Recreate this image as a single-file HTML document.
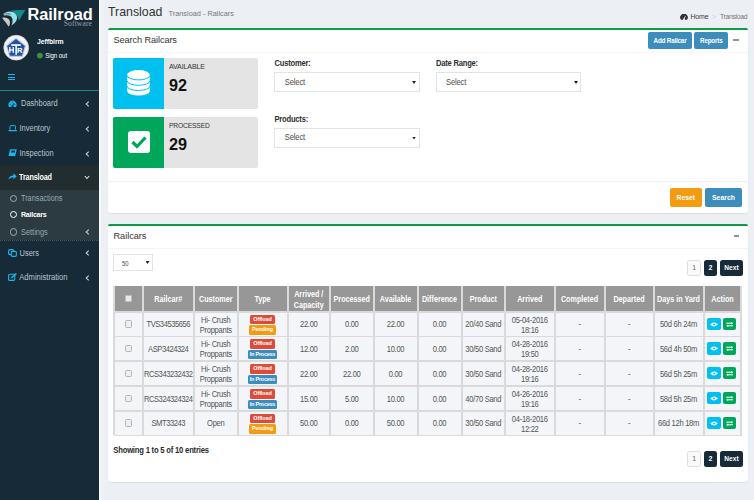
<!DOCTYPE html><html><head><meta charset="utf-8"><style>
*{margin:0;padding:0;box-sizing:border-box}
html,body{width:754px;height:500px;overflow:hidden;background:#ecf0f5;font-family:"Liberation Sans",sans-serif}
body{position:relative}
.a{position:absolute;white-space:nowrap}
.mi{position:absolute;left:20px;font-size:7.5px;color:#b8c7ce;line-height:10px;white-space:nowrap;transform:scaleY(1.13);transform-origin:0 62%;margin-top:0.6px}
.chev{position:absolute;left:85px;width:4px;height:6px}
.box{position:absolute;background:#fff;border-top:2px solid #0e9b45;border-radius:2px;box-shadow:0 1px 1px rgba(0,0,0,0.08)}
.dot{position:absolute;height:0;border-top:1px dotted #ececec}
.btn{position:absolute;color:#fff;font-weight:bold;text-align:center;border-radius:2px;white-space:nowrap}
.btn span{display:inline-block;transform:scaleY(1.12)}
.sel{position:absolute;border:1px solid #e0e3e8;background:#fff;height:20px}
.sel .s{position:absolute;left:9px;top:4.3px;font-size:7.6px;letter-spacing:-0.15px;color:#4a4a4a;line-height:10px;transform:scaleY(1.12);transform-origin:0 60%;margin-top:0.5px}
.sel .ar{position:absolute;width:4px;height:3px;background:#222;clip-path:polygon(0 0,100% 0,50% 100%)}
.lbl{position:absolute;font-weight:bold;font-size:7.6px;letter-spacing:-0.22px;color:#2e2e2e;line-height:8px;white-space:nowrap;transform:scaleY(1.08);transform-origin:0 70%;margin-top:0.4px}
.th{position:absolute;color:#fff;font-weight:bold;font-size:7.2px;line-height:9.5px;text-align:center;display:flex;align-items:center;justify-content:center;padding-top:1.9px}
.td{position:absolute;color:#555;font-size:7.6px;letter-spacing:-0.3px;line-height:10px;text-align:center;display:flex;flex-direction:column;align-items:center;justify-content:center;padding-top:2.4px}
.vl{position:absolute;width:2px;background:#dadada}
.hl{position:absolute;height:1.5px;background:#dadada}
.bdg{display:block;color:#fff;font-weight:bold;font-size:5.5px;letter-spacing:-0.1px;line-height:9.5px;height:9.5px;border-radius:1.5px;padding:0 2.6px;margin:0.5px 0}
.syh{display:inline-block;transform:scaleY(1.13);line-height:9.6px}
.sy{display:inline-block;transform:scaleY(1.16);line-height:9.1px}
.pg{position:absolute;height:16.8px;border-radius:2.5px;font-size:7px;text-align:center;line-height:16.8px;font-weight:bold}
</style></head><body>
<div class="a" style="left:0;top:0;width:99px;height:500px;background:#172a38"></div>
<div class="a" style="left:99px;top:0;width:1.5px;height:500px;background:#f6f8fa"></div>
<svg class="a" style="left:1px;top:8px" width="26" height="20" viewBox="0 0 26 20">
<path d="M10 2.5 L24.5 1.8 L18 12.5 Q16.5 6 10 2.5 Z" fill="#138a86"/>
<path d="M2.5 5.5 Q8 2 13 4.5 Q17.5 7.5 15.5 12.5 Q14 15.5 10.5 17.5 Q13 11.5 10 8.5 Q7 6.5 3 7.5 Z" fill="#9adfe6"/>
<path d="M2.5 5.8 Q7 4 10 6 L9.3 7 Q6 5.5 2.8 6.8 Z" fill="#6f8794"/>
<path d="M1.5 9.5 Q6 9 8.2 11.5 Q9.8 14 8.5 17.5 L7.5 18.5 Q5 14.5 1.5 10.5 Z" fill="#cfc9c3"/>
</svg>
<div class="a" style="left:27.4px;top:5.4px;font-size:16.35px;font-weight:bold;color:#fff;line-height:19px">Railroad</div>
<div class="a" style="left:63.8px;top:20.4px;font-family:'Liberation Serif',serif;font-size:7.6px;color:#9aa0a6;line-height:8px;letter-spacing:0.1px">Software</div>
<svg class="a" style="left:0;top:32px" width="32" height="32" viewBox="0 0 32 32">
<circle cx="16.2" cy="15.7" r="12.4" fill="#f3f3f3" stroke="#d0d0d0" stroke-width="0.8"/>
<path d="M16 6.3 L25.4 13.8 L22.4 24.2 L9.6 24.2 L6.6 13.8 Z" fill="#2352a3" stroke="#b9c9e2" stroke-width="1.1"/>
<rect x="11.2" y="12.2" width="9.6" height="1.7" fill="#fff"/>
<rect x="15.3" y="12.2" width="1.7" height="10.6" fill="#eef"/>
<rect x="9.2" y="15" width="1.3" height="5.8" fill="#fff"/>
<rect x="12.6" y="15" width="1.3" height="5.8" fill="#fff"/>
<rect x="9.2" y="17.3" width="4.7" height="1.2" fill="#fff"/>
<text x="16.9" y="20.8" font-family="Liberation Sans" font-weight="bold" font-size="7.6" fill="#fff">R</text>
</svg>
<div class="a" style="left:37px;top:37.2px;font-size:6.85px;letter-spacing:-0.05px;font-weight:bold;color:#fff;line-height:9px;transform:scaleY(1.08);transform-origin:0 70%">Jeffbirm</div>
<svg class="a" style="left:36px;top:52px" width="8" height="8" viewBox="0 0 8 8"><circle cx="3.9" cy="3.6" r="2.9" fill="#3f9139"/></svg>
<div class="a" style="left:45.3px;top:52.1px;font-size:6.1px;letter-spacing:-0.08px;color:#fff;line-height:8px;transform:scaleY(1.15);transform-origin:0 70%">Sign out</div>
<div class="a" style="left:8px;top:74.1px;width:7.2px;height:1.4px;background:#1ab7ea"></div>
<div class="a" style="left:8px;top:76.6px;width:7.2px;height:1.4px;background:#1ab7ea"></div>
<div class="a" style="left:8px;top:79.1px;width:7.2px;height:1.4px;background:#1ab7ea"></div>
<div class="a" style="left:0;top:90px;width:99px;height:1.3px;background:#17898c"></div>
<svg class="a" style="left:7.5px;top:99.5px" width="9" height="8" viewBox="0 0 9 8"><path d="M1 7 A4.1 4.1 0 1 1 8 7 Z" fill="#1ab7ea"/><path d="M4.5 6.3 L5.8 3.2" stroke="#172a38" stroke-width="1"/><circle cx="4.5" cy="6.2" r="1.1" fill="#172a38"/><circle cx="2.2" cy="4.2" r="0.5" fill="#172a38"/><circle cx="4.5" cy="2.1" r="0.5" fill="#172a38"/><circle cx="6.8" cy="4.2" r="0.5" fill="#172a38"/></svg>
<div class="mi" style="top:98.7px;left:21px">Dashboard</div>
<svg class="a" style="left:85px;top:101.0px" width="5" height="6" viewBox="0 0 5 6"><path d="M3.7 0.7 L1.2 3 L3.7 5.3" fill="none" stroke="#c3d0d6" stroke-width="1.1"/></svg>
<svg class="a" style="left:7.5px;top:124.5px" width="9.5" height="7" viewBox="0 0 9.5 7"><path d="M2 4.6 V1.4 Q2 0.6 2.8 0.6 H6.7 Q7.5 0.6 7.5 1.4 V4.6" fill="none" stroke="#1ab7ea" stroke-width="1"/><path d="M0.3 5 H9.2 L8.6 6.3 H0.9 Z" fill="#1ab7ea"/></svg>
<div class="mi" style="top:123.6px;left:19.5px">Inventory</div>
<svg class="a" style="left:85px;top:126.0px" width="5" height="6" viewBox="0 0 5 6"><path d="M3.7 0.7 L1.2 3 L3.7 5.3" fill="none" stroke="#c3d0d6" stroke-width="1.1"/></svg>
<svg class="a" style="left:7.5px;top:148.8px" width="9" height="7.5" viewBox="0 0 9 7.5"><path d="M3 0.3 H8.5 Q8.8 0.3 8.7 0.8 L7.3 6.6 Q7.2 7.1 6.7 7.1 H0.5 L1.9 1 Q2.1 0.3 3 0.3 Z" fill="#1ab7ea"/><path d="M3.4 1.6 H7.2 L6.8 3.4 H3 Z" fill="#172a38"/></svg>
<div class="mi" style="top:148px;left:19.5px">Inspection</div>
<svg class="a" style="left:85px;top:150.5px" width="5" height="6" viewBox="0 0 5 6"><path d="M3.7 0.7 L1.2 3 L3.7 5.3" fill="none" stroke="#c3d0d6" stroke-width="1.1"/></svg>
<div class="a" style="left:0;top:165.3px;width:99px;height:24.5px;background:#222d30"></div>
<div class="a" style="left:0;top:190px;width:99px;height:50px;background:#2c3b41"></div>
<div class="a" style="left:0;top:239.5px;width:99px;height:0;border-top:1px dotted #46565c"></div>
<svg class="a" style="left:8px;top:173px" width="9" height="7" viewBox="0 0 9 7"><path d="M0.5 6.8 Q1 2.5 5.5 2.5 V0.3 L8.7 3.3 L5.5 6.2 V4.2 Q2.5 4 0.5 6.8 Z" fill="#1ab7ea"/></svg>
<div class="mi" style="top:172.3px;left:19px;color:#fff;font-weight:bold;font-size:7.25px;letter-spacing:-0.15px">Transload</div>
<svg class="a" style="left:84px;top:174.5px" width="6" height="5" viewBox="0 0 6 5"><path d="M0.8 1 L3 3.5 L5.2 1" fill="none" stroke="#dfe7ea" stroke-width="1.1"/></svg>
<div class="a" style="left:9.6px;top:194.6px;width:7.5px;height:7.5px;border-radius:50%;border:1.7px solid #9cb0b9"></div>
<div class="mi" style="top:193.5px;left:21px;color:#93a9b3;font-size:7.3px">Transactions</div>
<div class="a" style="left:9.6px;top:210.6px;width:7.5px;height:7.5px;border-radius:50%;border:1.7px solid #fff"></div>
<div class="mi" style="top:209.6px;left:21px;color:#fff;font-weight:bold;font-size:7.1px;letter-spacing:-0.27px">Railcars</div>
<div class="a" style="left:9.6px;top:228.4px;width:7.5px;height:7.5px;border-radius:50%;border:1.7px solid #9cb0b9"></div>
<div class="mi" style="top:227.2px;left:21px;color:#93a9b3;font-size:7.4px">Settings</div>
<svg class="a" style="left:85px;top:229.0px" width="5" height="6" viewBox="0 0 5 6"><path d="M3.7 0.7 L1.2 3 L3.7 5.3" fill="none" stroke="#c3d0d6" stroke-width="1.1"/></svg>
<svg class="a" style="left:7.5px;top:249px" width="9" height="8" viewBox="0 0 9 8"><rect x="0.6" y="0.6" width="5" height="5" rx="1.3" fill="none" stroke="#1ab7ea" stroke-width="1.1"/><rect x="3.2" y="2.4" width="5.2" height="5" rx="1.3" fill="#172a38" stroke="#1ab7ea" stroke-width="1.1"/></svg>
<div class="mi" style="top:248px;left:19.5px">Users</div>
<svg class="a" style="left:85px;top:250.0px" width="5" height="6" viewBox="0 0 5 6"><path d="M3.7 0.7 L1.2 3 L3.7 5.3" fill="none" stroke="#c3d0d6" stroke-width="1.1"/></svg>
<svg class="a" style="left:7.5px;top:272.8px" width="9" height="8" viewBox="0 0 9 8"><rect x="0.6" y="1.3" width="6.2" height="6.1" rx="1.2" fill="none" stroke="#1ab7ea" stroke-width="1.1"/><path d="M3.3 5 L8.3 0.4" stroke="#1ab7ea" stroke-width="1.5"/></svg>
<div class="mi" style="top:272.8px;left:19.3px;font-size:7.6px">Administration</div>
<svg class="a" style="left:85px;top:275.0px" width="5" height="6" viewBox="0 0 5 6"><path d="M3.7 0.7 L1.2 3 L3.7 5.3" fill="none" stroke="#c3d0d6" stroke-width="1.1"/></svg>
<div class="a" style="left:108px;top:4.1px;font-size:12.35px;color:#333;line-height:16px">Transload</div>
<div class="a" style="left:168.5px;top:8.8px;font-size:7.35px;color:#777;line-height:9px">Transload - Railcars</div>
<svg class="a" style="left:679.5px;top:13.5px" width="8" height="6" viewBox="0 0 8 6"><path d="M1 5.8 A3.8 3.8 0 1 1 7 5.8 Z" fill="#333"/><path d="M4 5.3 L5.3 2.3" stroke="#ecf0f5" stroke-width="0.9"/><circle cx="4" cy="5.2" r="0.9" fill="#ecf0f5"/></svg>
<div class="a" style="left:690.5px;top:13.3px;font-size:7px;letter-spacing:-0.2px;color:#3a3a3a;line-height:8px">Home</div>
<div class="a" style="left:712px;top:13.3px;font-size:6.6px;color:#ccc;line-height:8px">&gt;</div>
<div class="a" style="left:720px;top:13.3px;font-size:6.9px;letter-spacing:-0.36px;color:#777;line-height:8px">Transload</div>
<div class="box" style="left:107.5px;top:27.5px;width:640px;height:185.3px"></div>
<div class="a" style="left:113.5px;top:34.5px;font-size:9.2px;letter-spacing:-0.1px;color:#333;line-height:11px">Search Railcars</div>
<div class="btn" style="left:648px;top:32px;width:44px;height:17px;background:#3c8dbc;font-size:6.3px;letter-spacing:-0.2px;line-height:17.5px"><span>Add Railcar</span></div>
<div class="btn" style="left:694.4px;top:32px;width:33.8px;height:17px;background:#3c8dbc;font-size:6.3px;letter-spacing:-0.2px;line-height:17.5px"><span>Reports</span></div>
<div class="a" style="left:733px;top:39.4px;width:5.5px;height:1.5px;background:#8e97a8"></div>
<div class="dot" style="left:108px;top:52px;width:639px"></div>
<div class="a" style="left:113px;top:58px;width:144.5px;height:50.5px;background:#e4e4e4;border-radius:2px"></div>
<div class="a" style="left:113px;top:58px;width:51px;height:50.5px;background:#00c0ef;border-radius:2px 0 0 2px"></div>
<div class="a" style="left:169px;top:62.6px;font-size:7.1px;letter-spacing:-0.15px;color:#333;line-height:9px;transform:scaleY(1.1);transform-origin:0 70%">AVAILABLE</div>
<div class="a" style="left:169px;top:76px;font-size:16.2px;font-weight:bold;color:#111;line-height:18px">92</div>
<div class="a" style="left:113px;top:117px;width:144.5px;height:50.5px;background:#e4e4e4;border-radius:2px"></div>
<div class="a" style="left:113px;top:117px;width:51px;height:50.5px;background:#00a65a;border-radius:2px 0 0 2px"></div>
<div class="a" style="left:169px;top:121.1px;font-size:6.7px;letter-spacing:-0.15px;color:#333;line-height:9px;transform:scaleY(1.1);transform-origin:0 70%">PROCESSED</div>
<div class="a" style="left:169px;top:135px;font-size:16.2px;font-weight:bold;color:#111;line-height:18px">29</div>
<svg class="a" style="left:127.3px;top:70.3px" width="23" height="26" viewBox="0 0 23 26">
<path d="M0.2 4.5 A11.3 4.4 0 0 1 22.8 4.5 V21.2 A11.3 4.4 0 0 1 0.2 21.2 Z" fill="#fff"/>
<path d="M0.2 5.6 A11.3 4.3 0 0 0 22.8 5.6" fill="none" stroke="#00c0ef" stroke-width="1"/>
<path d="M0.2 11 A11.3 4.3 0 0 0 22.8 11" fill="none" stroke="#00c0ef" stroke-width="1"/>
<path d="M0.2 16.2 A11.3 4.3 0 0 0 22.8 16.2" fill="none" stroke="#00c0ef" stroke-width="1"/>
</svg>
<svg class="a" style="left:127.5px;top:131px" width="22" height="22" viewBox="0 0 22 22">
<rect x="0" y="0" width="22" height="22" rx="3" fill="#fff"/>
<path d="M4.5 11 L9 15.5 L17.5 6.5" fill="none" stroke="#00a65a" stroke-width="3.2"/>
</svg>
<div class="lbl" style="left:274.5px;top:60px">Customer:</div>
<div class="sel" style="left:274px;top:72px;width:146px"><div class="s" style="left:9.8px">Select</div><div class="ar" style="left:137px;top:8px"></div></div>
<div class="lbl" style="left:436px;top:60px">Date Range:</div>
<div class="sel" style="left:436px;top:72px;width:145px"><div class="s">Select</div><div class="ar" style="left:137px;top:8px"></div></div>
<div class="lbl" style="left:274.5px;top:115.5px">Products:</div>
<div class="sel" style="left:274px;top:127.5px;width:146px"><div class="s" style="left:9.8px">Select</div><div class="ar" style="left:137px;top:8px"></div></div>
<div class="a" style="left:108px;top:181px;width:639px;height:1px;background:#f1f1f1"></div>
<div class="btn" style="left:669.5px;top:188px;width:32.5px;height:19px;background:#f39c12;font-size:6.8px;line-height:19px"><span>Reset</span></div>
<div class="btn" style="left:705px;top:188px;width:37px;height:19px;background:#3c8dbc;font-size:6.9px;line-height:19px"><span>Search</span></div>
<div class="box" style="left:107.5px;top:223.7px;width:640px;height:258.3px"></div>
<div class="a" style="left:113.5px;top:231px;font-size:9.2px;letter-spacing:-0.05px;color:#333;line-height:11px">Railcars</div>
<div class="a" style="left:733.5px;top:235.4px;width:5.5px;height:1.5px;background:#8e97a8"></div>
<div class="dot" style="left:108px;top:247.5px;width:639px"></div>
<div class="sel" style="left:113px;top:254px;width:39.5px;height:16.5px"><div class="s" style="left:8px;top:3.5px;font-size:5.9px">50</div><div class="ar" style="left:31.5px;top:6px"></div></div>
<div class="pg" style="left:687.3px;top:259.5px;width:14px;background:#fafafa;border:1px solid #ddd;color:#666;font-weight:normal;line-height:14.8px">1</div>
<div class="pg" style="left:704px;top:259.5px;width:13px;background:#172a38;color:#fff">2</div>
<div class="pg" style="left:720px;top:259.5px;width:23px;background:#172a38;color:#fff;font-size:6.6px">Next</div>
<div class="a" style="left:113.5px;top:286px;width:628.0px;height:25.5px;background:#979797"></div>
<div class="a" style="left:113.5px;top:311.5px;width:628.0px;height:123.5px;background:#f3f5f8"></div>
<div class="vl" style="left:112.5px;top:286px;height:149px"></div>
<div class="vl" style="left:141.5px;top:286px;height:149px"></div>
<div class="vl" style="left:193px;top:286px;height:149px"></div>
<div class="vl" style="left:236.5px;top:286px;height:149px"></div>
<div class="vl" style="left:286.5px;top:286px;height:149px"></div>
<div class="vl" style="left:329px;top:286px;height:149px"></div>
<div class="vl" style="left:372.5px;top:286px;height:149px"></div>
<div class="vl" style="left:416.5px;top:286px;height:149px"></div>
<div class="vl" style="left:460.5px;top:286px;height:149px"></div>
<div class="vl" style="left:504px;top:286px;height:149px"></div>
<div class="vl" style="left:553.5px;top:286px;height:149px"></div>
<div class="vl" style="left:603.5px;top:286px;height:149px"></div>
<div class="vl" style="left:652.5px;top:286px;height:149px"></div>
<div class="vl" style="left:702.5px;top:286px;height:149px"></div>
<div class="vl" style="left:740.0px;top:286px;height:149px"></div>
<div class="hl" style="left:113.5px;top:311.25px;width:628.0px"></div>
<div class="hl" style="left:113.5px;top:335.75px;width:628.0px"></div>
<div class="hl" style="left:113.5px;top:360.25px;width:628.0px"></div>
<div class="hl" style="left:113.5px;top:385.25px;width:628.0px"></div>
<div class="hl" style="left:113.5px;top:410.25px;width:628.0px"></div>
<div class="hl" style="left:113.5px;top:434.75px;width:628.0px"></div>
<div class="a" style="left:124.5px;top:295px;width:7px;height:7px;background:#e9e9e9;border:1px solid #bbb;border-radius:1px"></div>
<div class="th" style="left:142.5px;top:286px;width:51.5px;height:25.5px"><span class="syh">Railcar#</span></div>
<div class="th" style="left:194px;top:286px;width:43.5px;height:25.5px"><span class="syh">Customer</span></div>
<div class="th" style="left:237.5px;top:286px;width:50.0px;height:25.5px"><span class="syh">Type</span></div>
<div class="th" style="left:287.5px;top:286px;width:42.5px;height:25.5px"><span class="syh">Arrived /<br>Capacity</span></div>
<div class="th" style="left:330px;top:286px;width:43.5px;height:25.5px"><span class="syh">Processed</span></div>
<div class="th" style="left:373.5px;top:286px;width:44.0px;height:25.5px"><span class="syh">Available</span></div>
<div class="th" style="left:417.5px;top:286px;width:44.0px;height:25.5px"><span class="syh">Difference</span></div>
<div class="th" style="left:461.5px;top:286px;width:43.5px;height:25.5px"><span class="syh">Product</span></div>
<div class="th" style="left:505px;top:286px;width:49.5px;height:25.5px"><span class="syh">Arrived</span></div>
<div class="th" style="left:554.5px;top:286px;width:50.0px;height:25.5px"><span class="syh">Completed</span></div>
<div class="th" style="left:604.5px;top:286px;width:49.0px;height:25.5px"><span class="syh">Departed</span></div>
<div class="th" style="left:653.5px;top:286px;width:50.0px;height:25.5px"><span class="syh">Days in Yard</span></div>
<div class="th" style="left:703.5px;top:286px;width:38.0px;height:25.5px"><span class="syh">Action</span></div>
<div class="a" style="left:124.5px;top:320.25px;width:7px;height:7.5px;background:#eee;border:1px solid #b5b5b5;border-radius:1.5px"></div>
<div class="td" style="left:142.5px;top:311.5px;width:51.5px;height:24.5px;letter-spacing:-0.45px"><span class="sy">TVS34535656</span></div>
<div class="td" style="left:194px;top:311.5px;width:43.5px;height:24.5px"><span class="sy">Hi- Crush<br>Proppants</span></div>
<div class="td" style="left:237.5px;top:311.5px;width:50.0px;height:24.5px"><span class="bdg" style="background:#dd4b39;padding:0 3px">Offload</span><span class="bdg" style="background:#f39c12">Pending</span></div>
<div class="td" style="left:287.5px;top:311.5px;width:42.5px;height:24.5px"><span class="sy">22.00</span></div>
<div class="td" style="left:330px;top:311.5px;width:43.5px;height:24.5px"><span class="sy">0.00</span></div>
<div class="td" style="left:373.5px;top:311.5px;width:44.0px;height:24.5px"><span class="sy">22.00</span></div>
<div class="td" style="left:417.5px;top:311.5px;width:44.0px;height:24.5px"><span class="sy">0.00</span></div>
<div class="td" style="left:461.5px;top:311.5px;width:43.5px;height:24.5px"><span class="sy">20/40 Sand</span></div>
<div class="td" style="left:505px;top:311.5px;width:49.5px;height:24.5px"><span class="sy">05-04-2016<br>18:16</span></div>
<div class="td" style="left:554.5px;top:311.5px;width:50.0px;height:24.5px"><span class="sy">-</span></div>
<div class="td" style="left:604.5px;top:311.5px;width:49.0px;height:24.5px"><span class="sy">-</span></div>
<div class="td" style="left:653.5px;top:311.5px;width:50.0px;height:24.5px"><span class="sy">50d 6h 24m</span></div>
<div class="a" style="left:707px;top:317.8px;width:13.6px;height:12.3px;background:#00c0ef;border-radius:2px"></div>
<svg class="a" style="left:709.8px;top:321.5px" width="8.2" height="5" viewBox="0 0 8.2 5"><path d="M0.1 2.5 Q4.1 -1.3 8.1 2.5 Q4.1 6.3 0.1 2.5 Z" fill="#fff"/><circle cx="4.1" cy="2.5" r="0.95" fill="#00c0ef"/></svg>
<div class="a" style="left:723px;top:317.8px;width:13.3px;height:12.3px;background:#00a65a;border-radius:2px"></div>
<svg class="a" style="left:726px;top:321.5px" width="7.4" height="5" viewBox="0 0 7.4 5"><path d="M0.2 1.2 H5.8" stroke="#fff" stroke-width="1"/><path d="M5.3 0 L7.3 1.2 L5.3 2.4 Z" fill="#fff"/><path d="M7.2 3.8 H1.6" stroke="#fff" stroke-width="1"/><path d="M2.1 2.6 L0.1 3.8 L2.1 5 Z" fill="#fff"/></svg>
<div class="a" style="left:124.5px;top:344.75px;width:7px;height:7.5px;background:#eee;border:1px solid #b5b5b5;border-radius:1.5px"></div>
<div class="td" style="left:142.5px;top:336px;width:51.5px;height:24.5px;letter-spacing:-0.45px"><span class="sy">ASP3424324</span></div>
<div class="td" style="left:194px;top:336px;width:43.5px;height:24.5px"><span class="sy">Hi- Crush<br>Proppants</span></div>
<div class="td" style="left:237.5px;top:336px;width:50.0px;height:24.5px"><span class="bdg" style="background:#dd4b39;padding:0 3px">Offload</span><span class="bdg" style="background:#3c8dbc;letter-spacing:-0.25px;padding:0 2.2px">In Process</span></div>
<div class="td" style="left:287.5px;top:336px;width:42.5px;height:24.5px"><span class="sy">12.00</span></div>
<div class="td" style="left:330px;top:336px;width:43.5px;height:24.5px"><span class="sy">2.00</span></div>
<div class="td" style="left:373.5px;top:336px;width:44.0px;height:24.5px"><span class="sy">10.00</span></div>
<div class="td" style="left:417.5px;top:336px;width:44.0px;height:24.5px"><span class="sy">0.00</span></div>
<div class="td" style="left:461.5px;top:336px;width:43.5px;height:24.5px"><span class="sy">30/50 Sand</span></div>
<div class="td" style="left:505px;top:336px;width:49.5px;height:24.5px"><span class="sy">04-28-2016<br>19:50</span></div>
<div class="td" style="left:554.5px;top:336px;width:50.0px;height:24.5px"><span class="sy">-</span></div>
<div class="td" style="left:604.5px;top:336px;width:49.0px;height:24.5px"><span class="sy">-</span></div>
<div class="td" style="left:653.5px;top:336px;width:50.0px;height:24.5px"><span class="sy">56d 4h 50m</span></div>
<div class="a" style="left:707px;top:342.3px;width:13.6px;height:12.3px;background:#00c0ef;border-radius:2px"></div>
<svg class="a" style="left:709.8px;top:346px" width="8.2" height="5" viewBox="0 0 8.2 5"><path d="M0.1 2.5 Q4.1 -1.3 8.1 2.5 Q4.1 6.3 0.1 2.5 Z" fill="#fff"/><circle cx="4.1" cy="2.5" r="0.95" fill="#00c0ef"/></svg>
<div class="a" style="left:723px;top:342.3px;width:13.3px;height:12.3px;background:#00a65a;border-radius:2px"></div>
<svg class="a" style="left:726px;top:346px" width="7.4" height="5" viewBox="0 0 7.4 5"><path d="M0.2 1.2 H5.8" stroke="#fff" stroke-width="1"/><path d="M5.3 0 L7.3 1.2 L5.3 2.4 Z" fill="#fff"/><path d="M7.2 3.8 H1.6" stroke="#fff" stroke-width="1"/><path d="M2.1 2.6 L0.1 3.8 L2.1 5 Z" fill="#fff"/></svg>
<div class="a" style="left:124.5px;top:369.5px;width:7px;height:7.5px;background:#eee;border:1px solid #b5b5b5;border-radius:1.5px"></div>
<div class="td" style="left:142.5px;top:360.5px;width:51.5px;height:25.0px;letter-spacing:-0.45px"><span class="sy">RCS343232432</span></div>
<div class="td" style="left:194px;top:360.5px;width:43.5px;height:25.0px"><span class="sy">Hi- Crush<br>Proppants</span></div>
<div class="td" style="left:237.5px;top:360.5px;width:50.0px;height:25.0px"><span class="bdg" style="background:#dd4b39;padding:0 3px">Offload</span><span class="bdg" style="background:#3c8dbc;letter-spacing:-0.25px;padding:0 2.2px">In Process</span></div>
<div class="td" style="left:287.5px;top:360.5px;width:42.5px;height:25.0px"><span class="sy">22.00</span></div>
<div class="td" style="left:330px;top:360.5px;width:43.5px;height:25.0px"><span class="sy">22.00</span></div>
<div class="td" style="left:373.5px;top:360.5px;width:44.0px;height:25.0px"><span class="sy">0.00</span></div>
<div class="td" style="left:417.5px;top:360.5px;width:44.0px;height:25.0px"><span class="sy">0.00</span></div>
<div class="td" style="left:461.5px;top:360.5px;width:43.5px;height:25.0px"><span class="sy">30/50 Sand</span></div>
<div class="td" style="left:505px;top:360.5px;width:49.5px;height:25.0px"><span class="sy">04-28-2016<br>19:16</span></div>
<div class="td" style="left:554.5px;top:360.5px;width:50.0px;height:25.0px"><span class="sy">-</span></div>
<div class="td" style="left:604.5px;top:360.5px;width:49.0px;height:25.0px"><span class="sy">-</span></div>
<div class="td" style="left:653.5px;top:360.5px;width:50.0px;height:25.0px"><span class="sy">56d 5h 25m</span></div>
<div class="a" style="left:707px;top:366.8px;width:13.6px;height:12.3px;background:#00c0ef;border-radius:2px"></div>
<svg class="a" style="left:709.8px;top:370.5px" width="8.2" height="5" viewBox="0 0 8.2 5"><path d="M0.1 2.5 Q4.1 -1.3 8.1 2.5 Q4.1 6.3 0.1 2.5 Z" fill="#fff"/><circle cx="4.1" cy="2.5" r="0.95" fill="#00c0ef"/></svg>
<div class="a" style="left:723px;top:366.8px;width:13.3px;height:12.3px;background:#00a65a;border-radius:2px"></div>
<svg class="a" style="left:726px;top:370.5px" width="7.4" height="5" viewBox="0 0 7.4 5"><path d="M0.2 1.2 H5.8" stroke="#fff" stroke-width="1"/><path d="M5.3 0 L7.3 1.2 L5.3 2.4 Z" fill="#fff"/><path d="M7.2 3.8 H1.6" stroke="#fff" stroke-width="1"/><path d="M2.1 2.6 L0.1 3.8 L2.1 5 Z" fill="#fff"/></svg>
<div class="a" style="left:124.5px;top:394.5px;width:7px;height:7.5px;background:#eee;border:1px solid #b5b5b5;border-radius:1.5px"></div>
<div class="td" style="left:142.5px;top:385.5px;width:51.5px;height:25.0px;letter-spacing:-0.45px"><span class="sy">RCS324324324</span></div>
<div class="td" style="left:194px;top:385.5px;width:43.5px;height:25.0px"><span class="sy">Hi- Crush<br>Proppants</span></div>
<div class="td" style="left:237.5px;top:385.5px;width:50.0px;height:25.0px"><span class="bdg" style="background:#dd4b39;padding:0 3px">Offload</span><span class="bdg" style="background:#3c8dbc;letter-spacing:-0.25px;padding:0 2.2px">In Process</span></div>
<div class="td" style="left:287.5px;top:385.5px;width:42.5px;height:25.0px"><span class="sy">15.00</span></div>
<div class="td" style="left:330px;top:385.5px;width:43.5px;height:25.0px"><span class="sy">5.00</span></div>
<div class="td" style="left:373.5px;top:385.5px;width:44.0px;height:25.0px"><span class="sy">10.00</span></div>
<div class="td" style="left:417.5px;top:385.5px;width:44.0px;height:25.0px"><span class="sy">0.00</span></div>
<div class="td" style="left:461.5px;top:385.5px;width:43.5px;height:25.0px"><span class="sy">40/70 Sand</span></div>
<div class="td" style="left:505px;top:385.5px;width:49.5px;height:25.0px"><span class="sy">04-26-2016<br>19:16</span></div>
<div class="td" style="left:554.5px;top:385.5px;width:50.0px;height:25.0px"><span class="sy">-</span></div>
<div class="td" style="left:604.5px;top:385.5px;width:49.0px;height:25.0px"><span class="sy">-</span></div>
<div class="td" style="left:653.5px;top:385.5px;width:50.0px;height:25.0px"><span class="sy">58d 5h 25m</span></div>
<div class="a" style="left:707px;top:391.8px;width:13.6px;height:12.3px;background:#00c0ef;border-radius:2px"></div>
<svg class="a" style="left:709.8px;top:395.5px" width="8.2" height="5" viewBox="0 0 8.2 5"><path d="M0.1 2.5 Q4.1 -1.3 8.1 2.5 Q4.1 6.3 0.1 2.5 Z" fill="#fff"/><circle cx="4.1" cy="2.5" r="0.95" fill="#00c0ef"/></svg>
<div class="a" style="left:723px;top:391.8px;width:13.3px;height:12.3px;background:#00a65a;border-radius:2px"></div>
<svg class="a" style="left:726px;top:395.5px" width="7.4" height="5" viewBox="0 0 7.4 5"><path d="M0.2 1.2 H5.8" stroke="#fff" stroke-width="1"/><path d="M5.3 0 L7.3 1.2 L5.3 2.4 Z" fill="#fff"/><path d="M7.2 3.8 H1.6" stroke="#fff" stroke-width="1"/><path d="M2.1 2.6 L0.1 3.8 L2.1 5 Z" fill="#fff"/></svg>
<div class="a" style="left:124.5px;top:419.25px;width:7px;height:7.5px;background:#eee;border:1px solid #b5b5b5;border-radius:1.5px"></div>
<div class="td" style="left:142.5px;top:410.5px;width:51.5px;height:24.5px;letter-spacing:-0.45px"><span class="sy">SMT33243</span></div>
<div class="td" style="left:194px;top:410.5px;width:43.5px;height:24.5px"><span class="sy">Open</span></div>
<div class="td" style="left:237.5px;top:410.5px;width:50.0px;height:24.5px"><span class="bdg" style="background:#dd4b39;padding:0 3px">Offload</span><span class="bdg" style="background:#f39c12">Pending</span></div>
<div class="td" style="left:287.5px;top:410.5px;width:42.5px;height:24.5px"><span class="sy">50.00</span></div>
<div class="td" style="left:330px;top:410.5px;width:43.5px;height:24.5px"><span class="sy">0.00</span></div>
<div class="td" style="left:373.5px;top:410.5px;width:44.0px;height:24.5px"><span class="sy">50.00</span></div>
<div class="td" style="left:417.5px;top:410.5px;width:44.0px;height:24.5px"><span class="sy">0.00</span></div>
<div class="td" style="left:461.5px;top:410.5px;width:43.5px;height:24.5px"><span class="sy">30/50 Sand</span></div>
<div class="td" style="left:505px;top:410.5px;width:49.5px;height:24.5px"><span class="sy">04-18-2016<br>12:22</span></div>
<div class="td" style="left:554.5px;top:410.5px;width:50.0px;height:24.5px"><span class="sy">-</span></div>
<div class="td" style="left:604.5px;top:410.5px;width:49.0px;height:24.5px"><span class="sy">-</span></div>
<div class="td" style="left:653.5px;top:410.5px;width:50.0px;height:24.5px"><span class="sy">66d 12h 18m</span></div>
<div class="a" style="left:707px;top:416.8px;width:13.6px;height:12.3px;background:#00c0ef;border-radius:2px"></div>
<svg class="a" style="left:709.8px;top:420.5px" width="8.2" height="5" viewBox="0 0 8.2 5"><path d="M0.1 2.5 Q4.1 -1.3 8.1 2.5 Q4.1 6.3 0.1 2.5 Z" fill="#fff"/><circle cx="4.1" cy="2.5" r="0.95" fill="#00c0ef"/></svg>
<div class="a" style="left:723px;top:416.8px;width:13.3px;height:12.3px;background:#00a65a;border-radius:2px"></div>
<svg class="a" style="left:726px;top:420.5px" width="7.4" height="5" viewBox="0 0 7.4 5"><path d="M0.2 1.2 H5.8" stroke="#fff" stroke-width="1"/><path d="M5.3 0 L7.3 1.2 L5.3 2.4 Z" fill="#fff"/><path d="M7.2 3.8 H1.6" stroke="#fff" stroke-width="1"/><path d="M2.1 2.6 L0.1 3.8 L2.1 5 Z" fill="#fff"/></svg>
<div class="a" style="left:113.3px;top:446.3px;font-size:7.65px;letter-spacing:-0.2px;font-weight:bold;color:#2a2a2a;line-height:10px;transform:scaleY(1.13);transform-origin:0 70%">Showing 1 to 5 of 10 entries</div>
<div class="pg" style="left:687.3px;top:450.5px;width:14px;background:#fafafa;border:1px solid #ddd;color:#666;font-weight:normal;line-height:14.8px">1</div>
<div class="pg" style="left:704px;top:450.5px;width:13px;background:#172a38;color:#fff">2</div>
<div class="pg" style="left:720px;top:450.5px;width:23px;background:#172a38;color:#fff;font-size:6.6px">Next</div>
</body></html>
